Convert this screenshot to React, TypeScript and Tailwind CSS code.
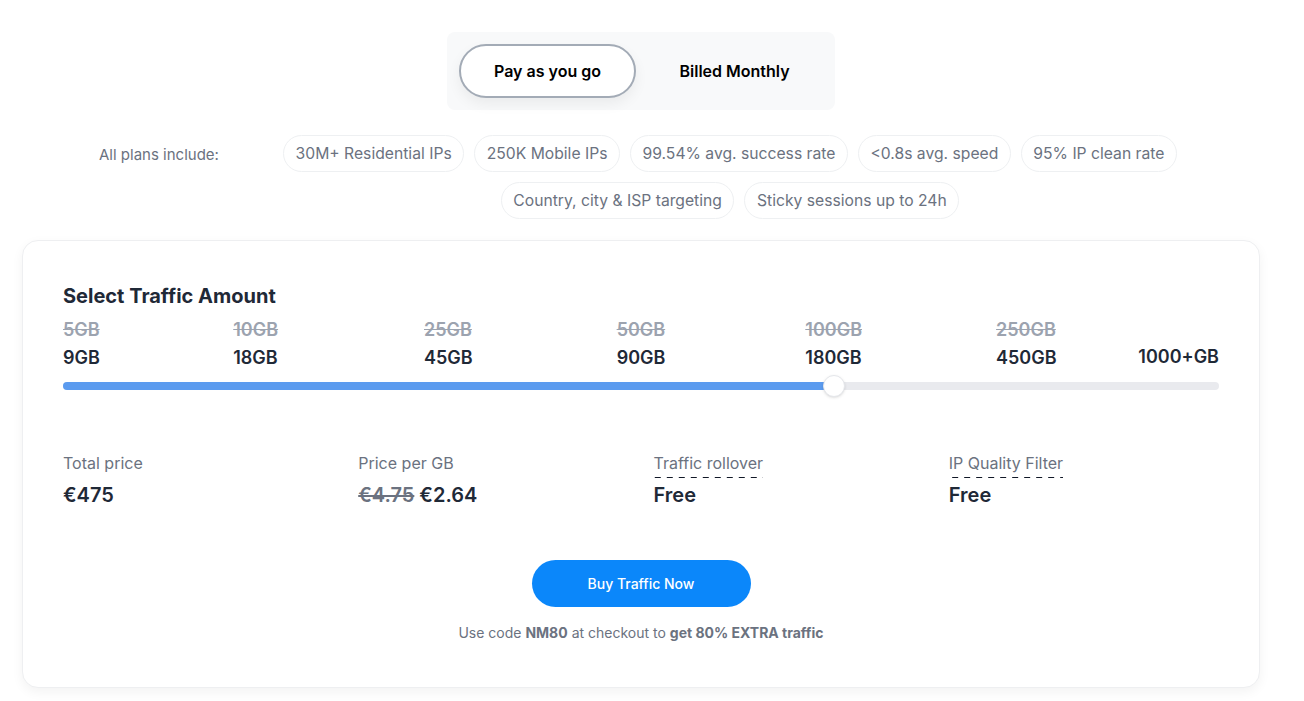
import { useState } from "react";

const features = [
  "30M+ Residential IPs",
  "250K Mobile IPs",
  "99.54% avg. success rate",
  "<0.8s avg. speed",
  "95% IP clean rate",
  "Country, city & ISP targeting",
  "Sticky sessions up to 24h",
];

const steps = [
  { old: "5GB", now: "9GB" },
  { old: "10GB", now: "18GB" },
  { old: "25GB", now: "45GB" },
  { old: "50GB", now: "90GB" },
  { old: "100GB", now: "180GB" },
  { old: "250GB", now: "450GB" },
  { old: "", now: "1000+GB" },
];

function Dashed({ children }: { children: React.ReactNode }) {
  return (
    <span className="-mb-[3px] inline-block bg-[linear-gradient(to_right,#111827_50%,transparent_50%)] bg-[length:12px_1px] bg-bottom bg-repeat-x pb-[3px]">
      {children}
    </span>
  );
}

export default function App() {
  const [mode, setMode] = useState<"payg" | "monthly">("payg");
  const active = 4;
  const pct = (active / (steps.length - 1)) * 100;

  return (
    <div className="min-h-screen bg-white font-['Inter','Noto_Sans',sans-serif] text-gray-800">
      <div className="ml-[22px] w-[1238px] pt-8">
        {/* billing toggle */}
        <div className="flex justify-center">
          <div className="flex h-[78px] w-[388px] items-center gap-[10px] rounded-lg bg-[#f8f9fa] px-3">
            <button
              onClick={() => setMode("payg")}
              className={`h-[54px] w-[177px] rounded-full text-[16px] font-semibold text-black ${
                mode === "payg"
                  ? "border-2 border-[#a3abb6] bg-white shadow-[0_6px_14px_rgba(0,0,0,0.06)]"
                  : ""
              }`}
            >
              Pay as you go
            </button>
            <button
              onClick={() => setMode("monthly")}
              className={`h-[54px] w-[177px] rounded-full text-[16px] font-semibold text-black ${
                mode === "monthly"
                  ? "border-2 border-[#a3abb6] bg-white shadow-[0_6px_14px_rgba(0,0,0,0.06)]"
                  : ""
              }`}
            >
              Billed Monthly
            </button>
          </div>
        </div>

        {/* included features */}
        <div className="mt-[25px] flex items-start pl-[77px] pr-[40px]">
          <p className="w-[141px] shrink-0 pt-[10px] text-[15px] leading-5 text-[#6b7280]">
            All plans include:
          </p>
          <div className="flex flex-1 flex-wrap justify-center gap-[10px]">
            {features.map((f) => (
              <span
                key={f}
                className="flex h-[37px] items-center rounded-full border border-[#eef0f2] px-[11.5px] text-[15.7px] text-[#6b7280]"
              >
                {f}
              </span>
            ))}
          </div>
        </div>

        {/* traffic card */}
        <div className="mt-[21px] rounded-2xl border border-[#eeeff1] bg-white px-10 pb-[44px] pt-[43px] shadow-[0_4px_12px_rgba(0,0,0,0.05)]">
          <h2 className="text-[20px] font-bold leading-6 text-[#1f2937]">Select Traffic Amount</h2>

          <div className="relative mt-[10px] h-[52px]">
            {steps.map((s, i) => {
              const last = i === steps.length - 1;
              const style =
                i === 0
                  ? { left: 0 }
                  : last
                    ? { right: 0 }
                    : { left: `${(i / (steps.length - 1)) * 100}%`, transform: "translateX(-50%)" };
              return (
                <div key={s.now} className={`absolute ${last ? "top-[23px]" : "top-0"}`} style={style}>
                  {s.old && (
                    <div className="text-[18px] font-semibold leading-6 text-[#9ca3af] line-through">{s.old}</div>
                  )}
                  <div className="mt-[4px] text-[18px] font-semibold leading-6 text-[#1f2937]">{s.now}</div>
                </div>
              );
            })}
          </div>

          <div className="relative mt-[12px] h-2 rounded-full bg-[#e9eaee]">
            <div className="h-2 rounded-full bg-[#5b9bef]" style={{ width: `${pct}%` }} />
            <div
              className="absolute top-1/2 h-[22px] w-[22px] -translate-x-1/2 -translate-y-1/2 rounded-full border border-[#e5e7eb] bg-white shadow-sm"
              style={{ left: `${pct}%` }}
            />
          </div>

          <div className="mt-[61px] grid grid-cols-4 gap-[25px]">
            <div>
              <p className="text-[16px] leading-6 text-[#6b7280]">Total price</p>
              <p className="mt-[6px] text-[20px] font-semibold leading-7 text-[#1f2937]">€475</p>
            </div>
            <div>
              <p className="text-[16px] leading-6 text-[#6b7280]">Price per GB</p>
              <p className="mt-[6px] text-[20px] font-semibold leading-7 text-[#1f2937]">
                <span className="text-[#6b7280] line-through">€4.75</span> €2.64
              </p>
            </div>
            <div>
              <p className="text-[16px] leading-6 text-[#6b7280]">
                <Dashed>Traffic rollover</Dashed>
              </p>
              <p className="mt-[6px] text-[20px] font-semibold leading-7 text-[#1f2937]">Free</p>
            </div>
            <div>
              <p className="text-[16px] leading-6 text-[#6b7280]">
                <Dashed>IP Quality Filter</Dashed>
              </p>
              <p className="mt-[6px] text-[20px] font-semibold leading-7 text-[#1f2937]">Free</p>
            </div>
          </div>

          <div className="mt-[51px] flex flex-col items-center">
            <button className="h-[47px] w-[219px] rounded-full bg-[#0b87fa] text-[14px] font-medium text-white">
              Buy Traffic Now
            </button>
            <p className="mt-4 text-[14px] leading-5 text-[#6b7280]">
              Use code <b className="font-bold text-[#6b7280]">NM80</b> at checkout to{" "}
              <b className="font-bold">get 80% EXTRA traffic</b>
            </p>
          </div>
        </div>
      </div>
    </div>
  );
}
